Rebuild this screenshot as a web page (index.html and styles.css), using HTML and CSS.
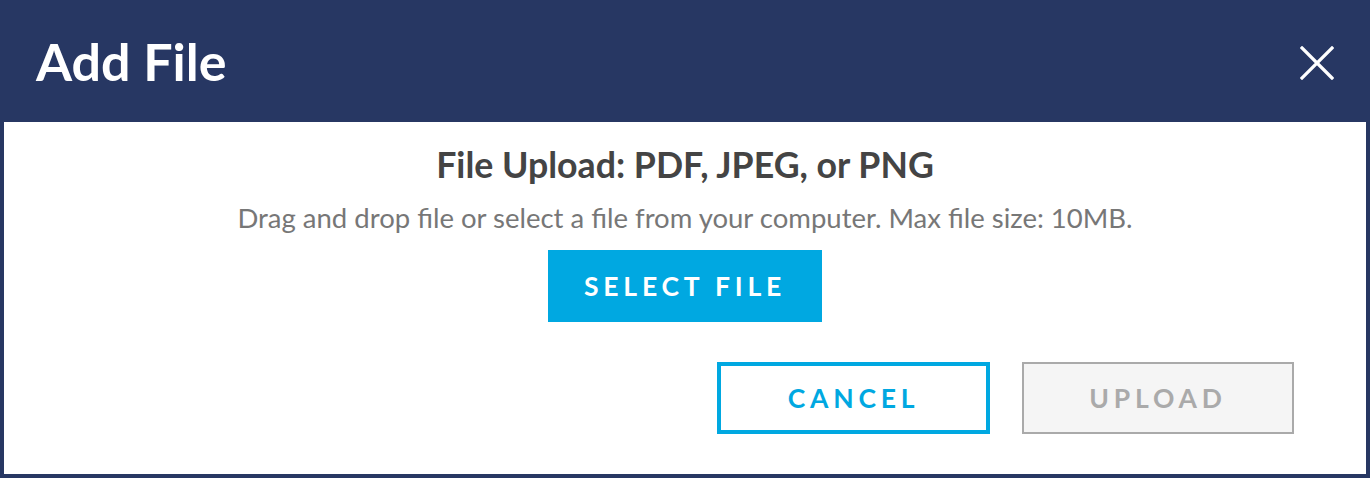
FILE: index.html
```html
<!DOCTYPE html>
<html lang="en">
<head>
<meta charset="utf-8">
<title>Add File</title>
<link rel="stylesheet" href="styles.css">
</head>
<body>
<div class="modal">
  <header class="modal-header">
    <h1 class="modal-title">Add File</h1>
    <button class="close-btn" aria-label="Close">
      <svg width="34" height="34" viewBox="0 0 34 34"><path d="M2 2 L32 32 M32 2 L2 32" stroke="#fff" stroke-width="3.2" stroke-linecap="square" fill="none"/></svg>
    </button>
  </header>
  <section class="modal-body">
    <h2 class="upload-title">File Upload: PDF, JPEG, or PNG</h2>
    <p class="upload-hint">Drag and drop file or select a file from your computer. Max file size: 10MB.</p>
    <button class="btn btn-primary">SELECT FILE</button>
    <div class="actions">
      <button class="btn btn-outline">CANCEL</button>
      <button class="btn btn-disabled" disabled>UPLOAD</button>
    </div>
  </section>
</div>
</body>
</html>
```

FILE: styles.css
```css
html, body {
  margin: 0;
  padding: 0;
}
body {
  font-family: Lato, "Open Sans", sans-serif;
  background: #ffffff;
}
.modal {
  width: 1370px;
  height: 478px;
  background: #273763;
  display: flex;
  flex-direction: column;
  box-sizing: border-box;
}
.modal-header {
  height: 122px;
  display: flex;
  align-items: center;
  justify-content: space-between;
  padding: 0 36px 0 36px;
  box-sizing: border-box;
}
.modal-title {
  margin: 0;
  color: #ffffff;
  font-size: 52px;
  font-weight: 700;
  line-height: 1;
  padding-bottom: 1px;
}
.close-btn {
  background: none;
  border: 0;
  padding: 0;
  width: 34px;
  height: 34px;
  display: flex;
  margin-top: 4px;
}
.modal-body {
  flex: 1;
  margin: 0 4px 4px 4px;
  background: #ffffff;
  display: flex;
  flex-direction: column;
  align-items: center;
  padding: 23px 72px 0 72px;
}
.upload-title {
  margin: 0;
  color: #444444;
  font-size: 35.7px;
  font-weight: 700;
  line-height: 40px;
}
.upload-hint {
  margin: 17px 0 0 0;
  color: #777777;
  font-size: 27.5px;
  line-height: 32px;
}
.btn {
  font-family: Lato, "Open Sans", sans-serif;
  font-weight: 700;
  font-size: 26.5px;
  letter-spacing: 4.8px;
  box-sizing: border-box;
  height: 72px;
  padding: 0;
}
.btn-primary {
  margin-top: 16px;
  width: 274px;
  background: #00a8e1;
  color: #ffffff;
  border: 0;
}
.actions {
  align-self: flex-end;
  display: flex;
  gap: 32px;
  margin-top: 40px;
}
.btn-outline {
  width: 273px;
  background: #ffffff;
  color: #00a8e1;
  border: 4px solid #00a8e1;
}
.btn-disabled {
  width: 272px;
  background: #f5f5f5;
  color: #aaaaaa;
  border: 2px solid #aaaaaa;
}
```
